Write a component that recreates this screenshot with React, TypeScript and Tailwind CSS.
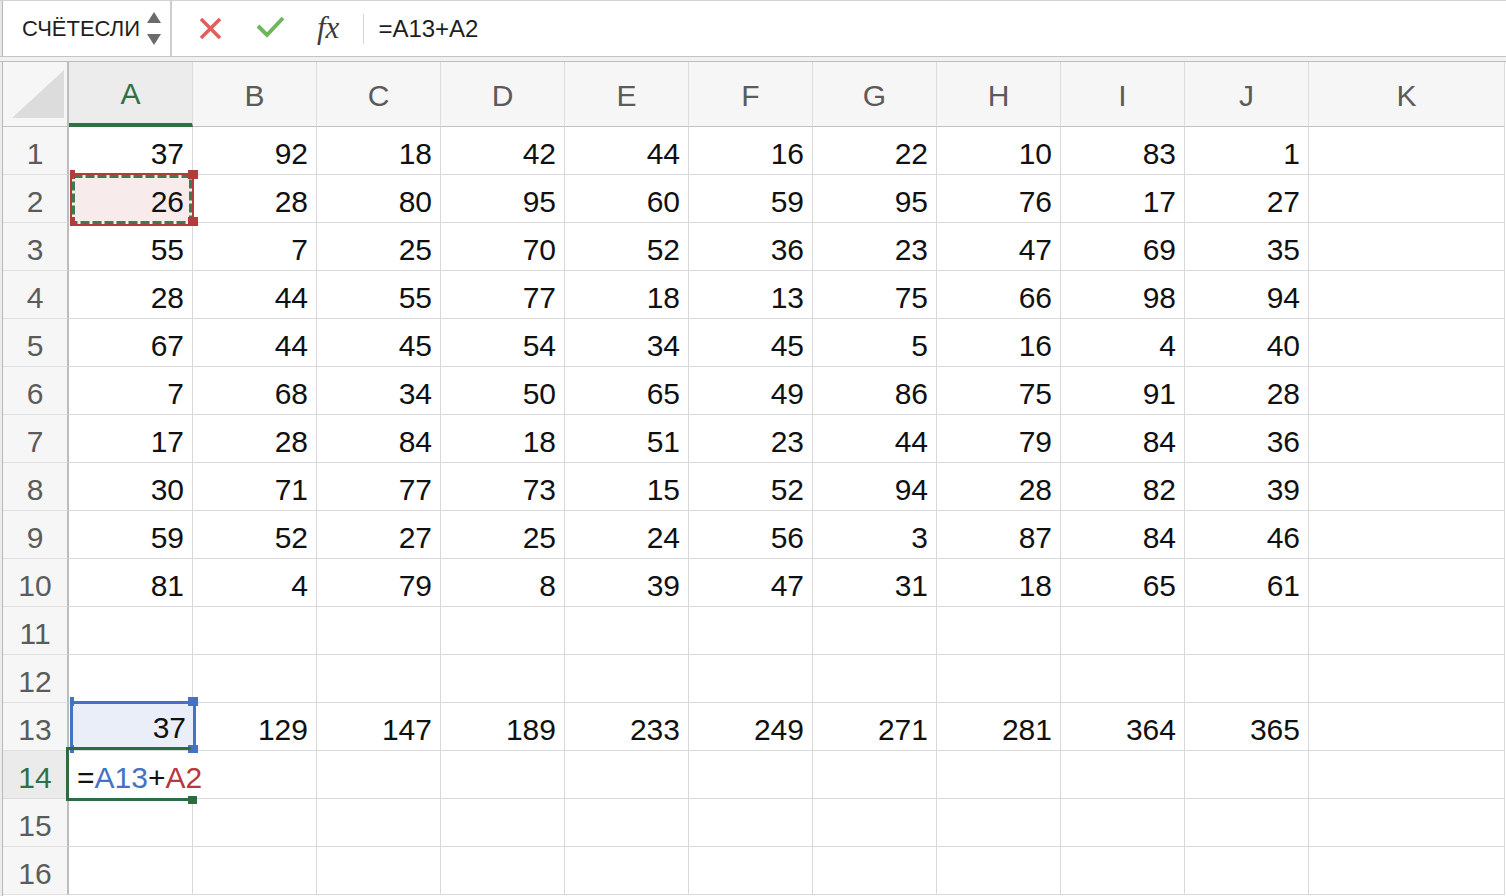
import React from "react";

const cols = ["A", "B", "C", "D", "E", "F", "G", "H", "I", "J", "K"];

const data: (number | null)[][] = [
  [37, 92, 18, 42, 44, 16, 22, 10, 83, 1],
  [26, 28, 80, 95, 60, 59, 95, 76, 17, 27],
  [55, 7, 25, 70, 52, 36, 23, 47, 69, 35],
  [28, 44, 55, 77, 18, 13, 75, 66, 98, 94],
  [67, 44, 45, 54, 34, 45, 5, 16, 4, 40],
  [7, 68, 34, 50, 65, 49, 86, 75, 91, 28],
  [17, 28, 84, 18, 51, 23, 44, 79, 84, 36],
  [30, 71, 77, 73, 15, 52, 94, 28, 82, 39],
  [59, 52, 27, 25, 24, 56, 3, 87, 84, 46],
  [81, 4, 79, 8, 39, 47, 31, 18, 65, 61],
  [],
  [],
  [37, 129, 147, 189, 233, 249, 271, 281, 364, 365],
  [],
  [],
  [],
];

function TopBar() {
  return (
    <div className="h-[62px] flex flex-col">
      <div className="h-[57px] flex items-stretch border-t border-t-[#d2d2d2] border-b border-b-[#c4c4c4] bg-[#fcfcfc]">
        <div className="w-[3px] bg-[#e6e6e6] border-r border-r-[#b8b8b8]" />
        <div className="w-[169px] bg-white border-r-2 border-r-[#cdcdcd] flex items-center pl-[19px] pr-[7px]">
          <div className="w-[120px] overflow-hidden whitespace-nowrap text-[22px] leading-[26px] text-[#1e1e1e]">
            СЧЁТЕСЛИ
          </div>
          <svg width="16" height="36" viewBox="0 0 16 36" className="ml-[4px]">
            <polygon points="1,12 15,12 8,1" fill="#6b6b6b" />
            <polygon points="1,23 15,23 8,34" fill="#6b6b6b" />
          </svg>
        </div>
        <div className="flex-1 flex items-center bg-white">
          <svg width="26" height="26" viewBox="0 0 26 26" className="ml-[26px]">
            <line x1="3" y1="3" x2="22" y2="22" stroke="#df5f5b" strokeWidth="3.6" />
            <line x1="22" y1="3" x2="3" y2="22" stroke="#df5f5b" strokeWidth="3.6" />
          </svg>
          <svg width="32" height="26" viewBox="0 0 32 26" className="ml-[31px]">
            <polyline
              points="3,10 12,19 28,2"
              fill="none"
              stroke="#6db65c"
              strokeWidth="4"
              strokeLinejoin="miter"
            />
          </svg>
          <div className="ml-[30px] font-['Liberation_Serif',serif] italic text-[31px] leading-[32px] text-[#3c3c3c] pb-[2px]">
            fx
          </div>
          <div className="ml-[24px] w-[1px] h-[30px] bg-[#d6d6d6]" />
          <div className="ml-[14px] text-[24px] leading-[28px] text-[#1e1e1e]">=A13+A2</div>
        </div>
      </div>
      <div className="h-[5px] bg-[#f1f1f1] border-b border-b-[#bdbdbd]" />
    </div>
  );
}

function Grid() {
  const cells: React.ReactNode[] = [];
  cells.push(
    <div
      key="corner"
      className="bg-[#f6f6f6] border-r-2 border-r-[#bdbdbd] border-b border-b-[#c2c2c2] relative"
    >
      <svg width="64" height="64" viewBox="0 0 64 64" className="absolute left-0 top-0">
        <polygon points="9,56 61,56 61,8" fill="#dcdcdc" />
      </svg>
    </div>
  );
  cols.forEach((c, i) => {
    const active = i === 0;
    cells.push(
      <div
        key={"h" + c}
        className={
          active
            ? "flex items-center justify-center pt-[3px] text-[30px] leading-[30px] text-[#2f7142] bg-[#ececec] border-r border-r-[#dcdcdc] border-b-4 border-b-[#2f7142]"
            : "flex items-center justify-center pt-[4px] text-[30px] leading-[30px] text-[#5b5b5b] bg-[#f6f6f6] border-r border-r-[#dcdcdc] border-b border-b-[#c2c2c2]"
        }
      >
        {c}
      </div>
    );
  });
  for (let r = 1; r <= 16; r++) {
    const activeRow = r === 14;
    cells.push(
      <div
        key={"r" + r}
        className={
          activeRow
            ? "flex items-end justify-center pb-[5px] text-[30px] leading-[30px] text-[#2f7142] bg-[#ebebeb] border-r-2 border-r-[#bdbdbd] border-b border-b-[#dcdcdc]"
            : "flex items-end justify-center pb-[5px] text-[30px] leading-[30px] text-[#5b5b5b] bg-[#f6f6f6] border-r-2 border-r-[#bdbdbd] border-b border-b-[#e0e0e0]"
        }
      >
        {r}
      </div>
    );
    const row = data[r - 1];
    for (let c = 0; c < 11; c++) {
      const v = row[c];
      if (r === 14 && c === 0) {
        cells.push(
          <div
            key={r + "-" + c}
            className="relative border-b border-b-[#d9d9d9] flex items-end pb-[5px] pl-[8px] text-[30px] leading-[30px] text-[#111] whitespace-nowrap z-10"
          >
            <span>=</span>
            <span className="text-[#4472c4]">A13</span>
            <span>+</span>
            <span className="text-[#b5393d]">A2</span>
          </div>
        );
        continue;
      }
      cells.push(
        <div
          key={r + "-" + c}
          className="border-r border-b border-[#d9d9d9] flex items-end justify-end pr-[8px] pb-[5px] text-[30px] leading-[30px] text-[#111]"
        >
          {v !== undefined && v !== null ? v : ""}
        </div>
      );
    }
  }

  return (
    <div className="relative">
      <div className="grid grid-cols-[66px_repeat(10,124px)_196px] grid-rows-[65px_repeat(16,48px)]">
        {cells}
      </div>

      {/* A2 reference highlight (red) with copy marquee (green dashed) */}
      <div className="absolute left-[67px] top-[111px] w-[124px] h-[53px] bg-[#f7ebeb] border-2 border-[#b23b3b] z-20">
        <svg width="120" height="49" viewBox="0 0 120 49" className="absolute left-0 top-0">
          <rect
            x="1.5"
            y="1.5"
            width="117"
            height="46"
            fill="none"
            stroke="#3f7a4f"
            strokeWidth="3"
            strokeDasharray="9 3"
          />
        </svg>
        <div className="absolute right-[8px] bottom-[7px] text-[30px] leading-[30px] text-[#111]">26</div>
      </div>
      <div className="absolute left-[67px] top-[108px] w-[5px] h-[9px] bg-[#b23b3b] z-30" />
      <div className="absolute left-[185px] top-[108px] w-[10px] h-[9px] bg-[#b23b3b] z-30" />
      <div className="absolute left-[67px] top-[155px] w-[5px] h-[9px] bg-[#b23b3b] z-30" />
      <div className="absolute left-[185px] top-[155px] w-[10px] h-[9px] bg-[#b23b3b] z-30" />

      {/* A13 reference highlight (blue) */}
      <div className="absolute left-[67px] top-[639px] w-[126px] h-[49px] bg-[#e9eef9] border-[3px] border-[#4472c4] z-20">
        <div className="absolute right-[7px] bottom-[4px] text-[30px] leading-[30px] text-[#111]">37</div>
      </div>
      <div className="absolute left-[67px] top-[635px] w-[4px] h-[9px] bg-[#4472c4] z-30" />
      <div className="absolute left-[185px] top-[635px] w-[10px] h-[9px] bg-[#4472c4] z-30" />
      <div className="absolute left-[67px] top-[683px] w-[4px] h-[8px] bg-[#4472c4] z-30" />
      <div className="absolute left-[185px] top-[683px] w-[10px] h-[8px] bg-[#4472c4] z-30" />

      {/* A14 active edit cell (green) */}
      <div className="absolute left-[63px] top-[685px] w-[125px] h-[54px] border-t-[3px] border-l-[3px] border-b-[3px] border-[#2f6b40] z-30" />
      <div className="absolute left-[185px] top-[734px] w-[9px] h-[8px] bg-[#2f6b40] z-30" />
    </div>
  );
}

export default function App() {
  return (
    <div className="w-[1506px] h-[896px] overflow-hidden bg-white font-['Liberation_Sans',Arial,sans-serif]">
      <TopBar />
      <div className="flex">
        <div className="w-[3px] h-[834px] bg-[#ececec] border-r border-r-[#b8b8b8]" />
        <Grid />
      </div>
    </div>
  );
}
